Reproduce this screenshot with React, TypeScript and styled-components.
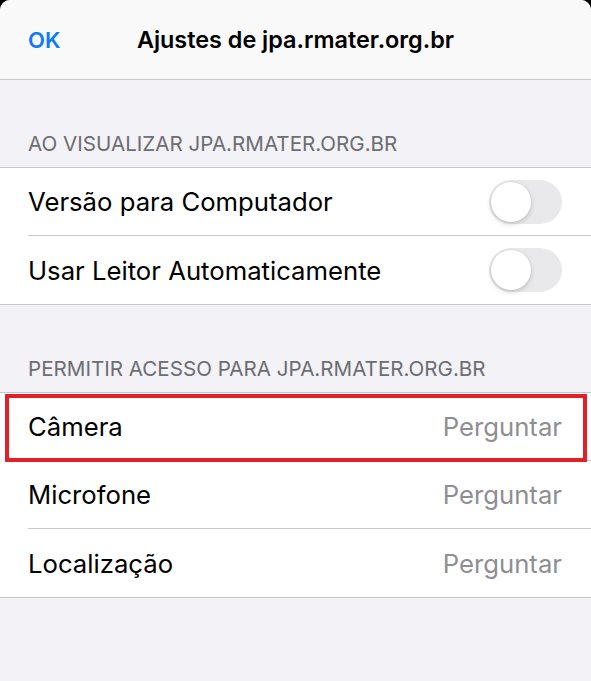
import React from "react";
import styled, { createGlobalStyle } from "styled-components";

const Global = createGlobalStyle`
  html, body { margin: 0; padding: 0; background: #000; }
  body { font-family: Inter, "Noto Sans", "Liberation Sans", sans-serif; -webkit-font-smoothing: antialiased; }
`;

const Sheet = styled.div`
  width: 591px;
  height: 681px;
  background: #f2f2f7;
  border-radius: 10px 10px 0 0;
  overflow: hidden;
  display: flex;
  flex-direction: column;
`;

const NavBar = styled.div`
  height: 79px;
  background: #f9f9f9;
  border-bottom: 1px solid #c8c7cc;
  display: grid;
  grid-template-columns: 1fr auto 1fr;
  align-items: center;
  padding: 0 28px;
`;

const NavButton = styled.span`
  color: #0a7aff;
  font-size: 22px;
  font-weight: 600;
  justify-self: start;
`;

const Title = styled.span`
  color: #000;
  font-size: 23.4px;
  font-weight: 600;
`;

const SectionHeader = styled.div<{ $top: number }>`
  padding: ${(p) => p.$top}px 28px 12px;
  color: #6d6d72;
  font-size: 20.6px;
  line-height: 22px;
  text-transform: uppercase;
`;

const Group = styled.div`
  background: #fff;
  border-top: 1px solid #c8c7cc;
  border-bottom: 1px solid #c8c7cc;
`;

const Row = styled.div`
  position: relative;
  height: 68px;
  display: flex;
  align-items: center;
  padding-left: 28px;
`;

const RowInner = styled.div<{ $last?: boolean }>`
  flex: 1;
  height: 100%;
  display: flex;
  align-items: center;
  justify-content: space-between;
  padding-right: 29px;
  border-bottom: ${(p) => (p.$last ? "none" : "1px solid #c8c7cc")};
  box-sizing: border-box;
`;

const Label = styled.span`
  font-size: 25.7px;
  color: #000;
`;

const Value = styled.span`
  font-size: 25.7px;
  color: #8e8e93;
`;

const Toggle = styled.div`
  width: 73px;
  height: 44px;
  border-radius: 22px;
  background: #e9e9eb;
  display: flex;
  align-items: center;
  padding: 2px;
  box-sizing: border-box;
`;

const Knob = styled.div`
  width: 40px;
  height: 40px;
  border-radius: 50%;
  background: #fff;
  box-shadow: 0 2px 5px rgba(0, 0, 0, 0.18), 0 0 0 0.5px rgba(0, 0, 0, 0.06);
`;

const Highlight = styled.div`
  position: absolute;
  left: 5px;
  right: 4px;
  top: 1px;
  bottom: -1px;
  border: 4px solid #e3202a;
  pointer-events: none;
`;

const Spacer = styled.div`
  flex: 1;
`;

export default function App() {
  return (
    <>
      <Global />
      <Sheet>
        <NavBar>
          <NavButton>OK</NavButton>
          <Title>Ajustes de jpa.rmater.org.br</Title>
        </NavBar>
        <SectionHeader $top={53}>Ao visualizar jpa.rmater.org.br</SectionHeader>
        <Group>
          <Row>
            <RowInner>
              <Label>Versão para Computador</Label>
              <Toggle>
                <Knob />
              </Toggle>
            </RowInner>
          </Row>
          <Row>
            <RowInner $last>
              <Label>Usar Leitor Automaticamente</Label>
              <Toggle>
                <Knob />
              </Toggle>
            </RowInner>
          </Row>
        </Group>
        <SectionHeader $top={53}>Permitir acesso para jpa.rmater.org.br</SectionHeader>
        <Group>
          <Row>
            <RowInner>
              <Label>Câmera</Label>
              <Value>Perguntar</Value>
            </RowInner>
            <Highlight />
          </Row>
          <Row>
            <RowInner>
              <Label>Microfone</Label>
              <Value>Perguntar</Value>
            </RowInner>
          </Row>
          <Row>
            <RowInner $last>
              <Label>Localização</Label>
              <Value>Perguntar</Value>
            </RowInner>
          </Row>
        </Group>
        <Spacer />
      </Sheet>
    </>
  );
}
